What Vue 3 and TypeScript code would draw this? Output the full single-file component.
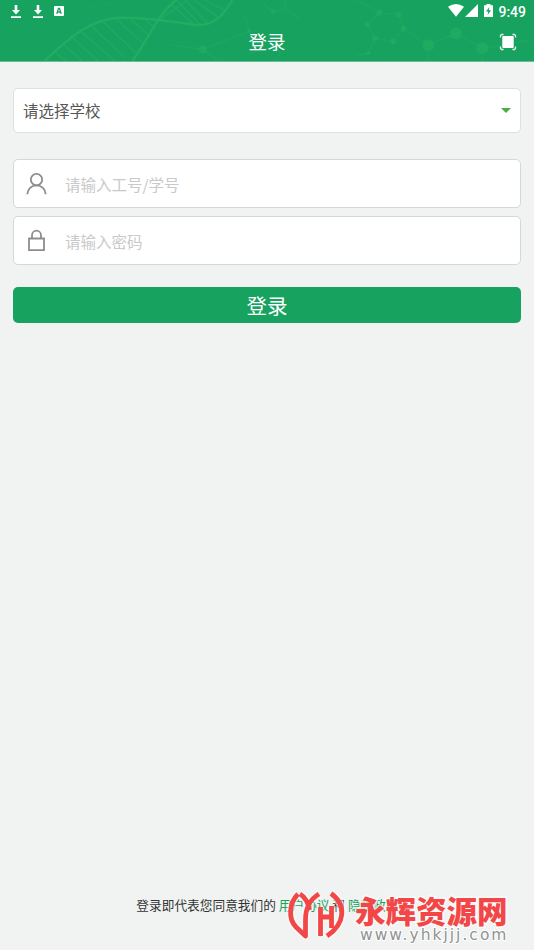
<script setup lang="ts">
import { ref } from 'vue'

const account = ref('')
const password = ref('')
</script>

<template>
  <main class="screen">
    <header class="header">
      <svg class="pattern" viewBox="0 0 534 62" fill="none" stroke="#24b263">
        <g stroke-width="2.5">
          <path d="M41 62C67 37 91 17 121 18C148 18 170 22 192 25C212 28 222 16 232 0" />
          <path d="M130 62C148 40 157 5 188 -8" />
          <path d="M52 53l10 9M59 44l20 18M67 36l28 26M76 30l36 32M86 24l36 34M98 20l36 34M112 18l29 26M127 18l20 18M142 19l12 10M160 18l25-17M170 5l22 19M176 1l24 25M184 0l24 25M193 0l25 18M204 0l21 11" stroke-width="1.8" opacity=".7" />
        </g>
        <path d="M20 60C48 20 79 2 121 4M42 25l12 10M55 16l12 12M68 9l12 11" opacity=".35" />
        <g stroke-width="1.2" opacity=".6">
          <path d="M263 3l10 9 12-3 1-9M285 9l16 11" />
          <path d="M354 2h9l18 11 20 2 5 14-11 13-18-3-8-14 12-12M406 29l25 17 28-12 27 15 48-8M431 46v16M486 49v13M377 39l-7 15-12 3M202 50l47-18M202 50l-32-4M202 50l15 12M249 32l-5-18M247 56l10-5 17-3 7 6-7 8" />
        </g>
        <g fill="#24b263" stroke="none" opacity=".8">
          <circle cx="273" cy="12" r="2" /><circle cx="249" cy="32" r="2" />
          <circle cx="381" cy="13" r="3" /><circle cx="401" cy="15" r="3" /><circle cx="406" cy="29" r="3" /><circle cx="395" cy="42" r="3" /><circle cx="377" cy="39" r="3" /><circle cx="369" cy="25" r="3" /><circle cx="370" cy="54" r="2" />
          <circle cx="431" cy="46" r="6" /><circle cx="459" cy="34" r="6" /><circle cx="486" cy="49" r="6" /><circle cx="202" cy="50" r="4" />
        </g>
      </svg>

      <div class="status">
        <div class="notices">
          <svg v-for="n in 2" :key="n" width="12" height="14" viewBox="0 0 12 14" fill="#fff"><path d="M4.7 0h2.6v5H10L6 9.5 2 5h2.7zM1 11.3h10V13H1z" /></svg>
          <svg width="10" height="10" viewBox="0 0 10 10"><rect width="10" height="10" rx="1" fill="#fff" /><path d="M2.8 7.8 4.5 2.3h1L7.2 7.8M3.5 6h3" fill="none" stroke="#17a260" stroke-width="1.3" /></svg>
        </div>
        <div class="device">
          <svg width="16" height="13" viewBox="0 0 16 13"><path d="M0 2.8Q8-2.8 16 2.8L8 12.7z" fill="#fff" /></svg>
          <svg class="signal" width="13" height="13" viewBox="0 0 13 13"><path d="M13 0v13H0z" fill="#fff" /></svg>
          <svg class="battery" width="9" height="13" viewBox="0 0 9 13"><path d="M2.5 0h4v1.3H9V13H0V1.3h2.5z" fill="#fff" /><path d="M5.4 3 2 7.5h2.2L3.6 11 7 6.3H4.8z" fill="#17a260" /></svg>
          <time>9:49</time>
        </div>
      </div>
      <div class="nav">
        <h1>登录</h1>
        <svg class="scan" width="18" height="18" viewBox="0 0 18 18"><rect x="3.3" y="3" width="11.4" height="12" rx="1" fill="#fff" /><path d="M1.5 4.5V2.5l1-1h2M13.5 1.5h2l1 1v2M16.5 13.5v2l-1 1h-2M4.5 16.5h-2l-1-1v-2" fill="none" stroke="#e5f5ed" stroke-width="1.3" /></svg>
      </div>
    </header>

    <form class="form" @submit.prevent>
      <button class="school" type="button"><span>请选择学校</span><i class="caret"></i></button>
      <label class="field account">
        <svg width="22" height="24" viewBox="0 0 22 24" fill="none" stroke="#8d8d8d" stroke-width="1.8"><circle cx="10.5" cy="7.6" r="5.7" /><path d="M1.3 22.3C1.6 17 5.3 13.3 10.5 13.3S19.4 17 19.7 22.3" /></svg>
        <input v-model="account" type="text" placeholder="请输入工号/学号">
      </label>
      <label class="field password">
        <svg width="22" height="24" viewBox="0 0 22 24" fill="none" stroke="#8d8d8d" stroke-width="1.8"><path d="M3 9.5h15v11.7H3zM6 9.5V6.2a4.5 4.5 0 0 1 9 0v3.3" /></svg>
        <input v-model="password" type="password" placeholder="请输入密码">
      </label>
      <button class="submit" type="submit">登录</button>
    </form>

    <footer class="agreement">登录即代表您同意我们的 <a>用户协议</a> 和 <a>隐私政策</a></footer>

    <aside class="watermark">
      <svg class="mark" viewBox="0 0 56 50" fill="none">
        <g v-for="layer in ['halo', 'ink']" :key="layer" :class="layer">
          <path d="M10 4C1 13 0 29 8 37L17.5 46V30C17.5 18 21 10 31 4M12 4C17 7 20 12 21.5 20" />
          <path d="M32.5 17v29M32.5 27h11M43.5 16v22M43 3.5C59 15 57 34 39 46" />
        </g>
      </svg>
      <div class="brand"><strong>永辉资源网</strong><span>www.yhkjjj.com</span></div>
    </aside>
  </main>
</template>

<style>
body { background: #f0f3f2; }
</style>

<style scoped>
* { box-sizing: border-box; }
.screen { position: relative; display: flex; flex-direction: column; height: 950px; overflow: hidden; background: #f0f3f2; font-family: "Noto Sans CJK SC", sans-serif; }
.header { position: relative; height: 62px; background: #17a260; border-bottom: 1px solid #69bd94; color: #fff; }
.pattern { position: absolute; inset: 0; width: 534px; height: 61px; opacity: .75; }
.status { position: relative; display: flex; justify-content: space-between; height: 23px; padding: 4px 8px 0 10px; }
.notices, .device { display: flex; align-items: flex-start; }
.notices { gap: 10px; padding-top: 1px; }
.notices svg:last-child { margin-top: 1px; }
.signal { margin-left: 1px; }
.battery { margin-left: 6px; }
time { margin-left: 5px; font: 500 14px/16px Roboto, sans-serif; }
.nav { position: relative; display: flex; justify-content: flex-end; align-items: center; height: 38px; padding-right: 17px; }
h1 { position: absolute; inset: 0; margin: 0; text-align: center; font-size: 18.5px; line-height: 36px; font-weight: 400; }
.form { display: flex; flex-direction: column; padding: 26px 13px 0; }
.school, .field { display: flex; align-items: center; width: 100%; border: 1px solid #d5d8d7; border-radius: 5px; background: #fff; }
.school { justify-content: space-between; height: 45px; padding: 0 9px 1px; border-color: #dedfdf; color: #555; font: 15.5px "Noto Sans CJK SC", sans-serif; }
.school span { line-height: 22px; }
.caret { border: 5px solid transparent; border-top-color: #4dac45; border-bottom: 0; }
.field { height: 49px; padding-left: 12px; }
.account { margin-top: 26px; }
.password { margin-top: 8px; }
input { flex: 1; min-width: 0; margin-left: 17px; padding: 0; border: 0; outline: 0; color: #555; background: transparent; font: 15.5px "Noto Sans CJK SC", sans-serif; }
input::placeholder { color: #c9c9c9; opacity: 1; }
.submit { height: 36px; margin-top: 22px; padding: 0; border: 0; border-radius: 5px; background: #17a260; color: #fff; font: 20.5px/34px "Noto Sans CJK SC", sans-serif; }
.agreement { margin-top: auto; margin-bottom: 35px; padding-left: 1px; text-align: center; font-size: 12.7px; line-height: 20px; color: #333; white-space: nowrap; }
.agreement a { color: #17a260; }
.watermark { position: absolute; left: 288px; top: 890px; display: flex; }
.mark { width: 56px; height: 50px; overflow: visible; }
.halo { stroke: rgb(255 255 255 / .55); stroke-width: 8; stroke-linejoin: round; }
.ink { stroke: #f34747; stroke-width: 4.8; stroke-linejoin: round; }
.brand { display: flex; flex-direction: column; margin-left: 11px; }
.brand strong { height: 36px; color: #f34747; font-size: 30.5px; font-weight: 900; line-height: 40px; white-space: nowrap; -webkit-text-stroke: 3px rgb(255 255 255 / .65); paint-order: stroke fill; }
.brand span { width: 150px; margin-left: 5px; color: #929292; font: 15.5px/19px "DejaVu Sans", sans-serif; letter-spacing: 2px; white-space: nowrap; -webkit-text-stroke: 2px #fff; paint-order: stroke fill; }
</style>
